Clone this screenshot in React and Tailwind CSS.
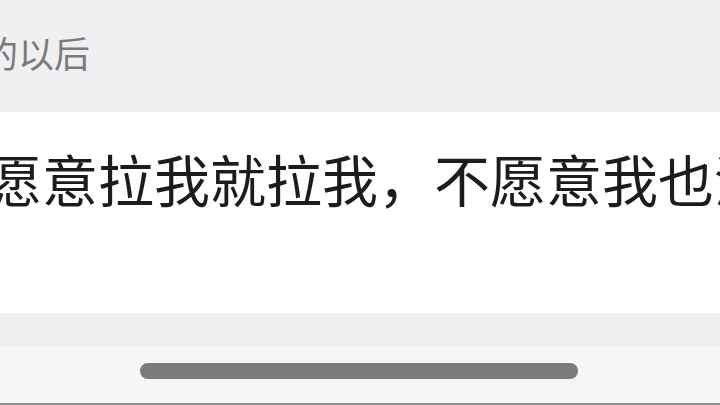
export default function App() {
  const font = { fontFamily: '"Noto Sans CJK SC", "Noto Sans", sans-serif' };
  return (
    <div className="w-[720px] h-[405px] overflow-hidden flex flex-col bg-[#f6f6f7]" style={font}>
      <div className="h-[112px] shrink-0 bg-[#f0f0f2] overflow-hidden pt-[34px]">
        <div className="ml-[-18px] whitespace-nowrap text-[36px] leading-none text-[#7b7b7d]">的以后</div>
      </div>
      <div className="h-[201px] shrink-0 bg-white overflow-hidden pt-[38px]">
        <div className="ml-[-14px] whitespace-nowrap text-[56px] leading-none text-[#1c1c1c]">
          愿意拉我就拉我，不愿意我也没办法
        </div>
      </div>
      <div className="h-[34px] shrink-0 bg-[#efeff1]" />
      <div className="flex-1 flex flex-col bg-[#f6f6f7]">
        <div className="flex-1 pt-[16px] pl-[140px]">
          <div className="w-[438px] h-[16px] rounded-full bg-[#7b7b7b]" />
        </div>
        <div className="h-[2px] bg-[#8c8c8c]" />
      </div>
    </div>
  );
}
